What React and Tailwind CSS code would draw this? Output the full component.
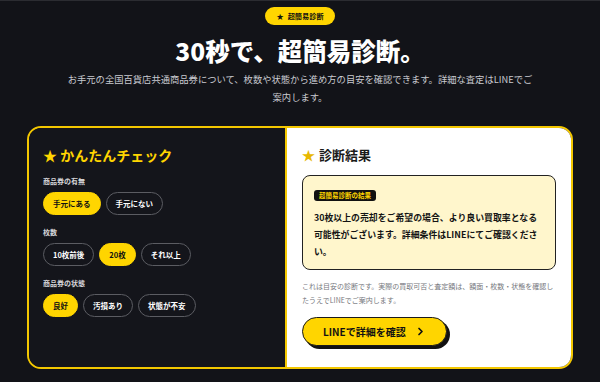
import React, { useState } from "react";

const groups = [
  { label: "商品券の有無", options: ["手元にある", "手元にない"], active: 0 },
  { label: "枚数", options: ["10枚前後", "20枚", "それ以上"], active: 1 },
  { label: "商品券の状態", options: ["良好", "汚損あり", "状態が不安"], active: 0 },
];

function Choice({ group }) {
  const [active, setActive] = useState(group.active);
  return (
    <div className="flex flex-col">
      <div className="text-[7px] leading-[12px] font-bold text-[#d4d4d8]">{group.label}</div>
      <div className="mt-[5px] flex gap-[5px]">
        {group.options.map((opt, i) => (
          <button
            key={opt}
            onClick={() => setActive(i)}
            className={
              i === active
                ? "h-[23px] px-[9px] rounded-full bg-[#ffd500] border-[1.5px] border-[#ffd500] text-[7.5px] font-bold text-[#111] flex items-center"
                : "h-[23px] px-[9px] rounded-full border-[1.5px] border-[#5b5c62] text-[7.5px] font-bold text-white flex items-center"
            }
          >
            {opt}
          </button>
        ))}
      </div>
    </div>
  );
}

export default function App() {
  return (
    <div className="min-h-screen bg-[#121318] border-t border-[#2b2c31] font-['Noto_Sans_CJK_JP','Noto_Sans',sans-serif] flex flex-col items-center pt-[6px]">
      {/* top badge */}
      <div className="h-[18px] px-[11px] rounded-full bg-[#ffd500] flex items-center gap-[4px] text-[7.2px] font-bold text-[#111]">
        <span>★</span>
        <span>超簡易診断</span>
      </div>

      <h1 className="mt-[10px] text-[24.5px] leading-[32px] font-black text-white">30秒で、超簡易診断。</h1>

      <p className="mt-[4px] text-center text-[9.3px] leading-[17.5px] text-[#c9cad0]">
        お手元の全国百貨店共通商品券について、枚数や状態から進め方の目安を確認できます。詳細な査定はLINEでご
        <br />
        案内します。
      </p>

      {/* main card */}
      <div className="mt-[20px] w-[546px] h-[243px] rounded-[14px] border-2 border-[#f3c700] overflow-hidden grid grid-cols-[256px_1fr]">
        {/* left: quick check */}
        <div className="bg-[#14151b] pt-[17px] px-[14px] flex flex-col">
          <h2 className="text-[14px] leading-[20px] font-bold text-[#ffd500]">★ かんたんチェック</h2>
          <div className="mt-[10px] flex flex-col gap-[11px]">
            {groups.map((g) => (
              <Choice key={g.label} group={g} />
            ))}
          </div>
        </div>

        {/* right: result */}
        <div className="bg-white border-l-2 border-[#f3c700] pt-[17px] px-[15px] flex flex-col">
          <h2 className="text-[13px] leading-[20px] font-bold text-[#1a1a1a] flex items-center gap-[4px]">
            <span className="text-[#e8b800]">★</span>
            <span>診断結果</span>
          </h2>

          <div className="mt-[10px] rounded-[8px] border-[1.5px] border-[#222] bg-[#fff6cc] pt-[14px] pb-[9px] px-[11px]">
            <div className="w-fit rounded-[3px] bg-[#111] px-[5px] text-[6.5px] leading-[11px] font-bold text-[#ffd500]">
              超簡易診断の結果
            </div>
            <p className="mt-[8px] whitespace-nowrap text-[8.9px] leading-[17px] font-bold text-[#141414]">
              30枚以上の売却をご希望の場合、より良い買取率となる
              <br />
              可能性がございます。詳細条件はLINEにてご確認くださ
              <br />
              い。
            </p>
          </div>

          <p className="mt-[9px] whitespace-nowrap text-[7px] leading-[14px] text-[#76777d]">
            これは目安の診断です。実際の買取可否と査定額は、額面・枚数・状態を確認し
            <br />
            たうえでLINEでご案内します。
          </p>

          <div className="mt-[10px]">
            <button className="h-[29px] pl-[20px] pr-[22px] rounded-full bg-[#ffd500] border-[1.5px] border-[#1a1a1a] shadow-[3px_3px_0_#111] flex items-center gap-[11px] text-[10px] font-bold text-[#111]">
              <span>LINEで詳細を確認</span>
              <svg width="7" height="9" viewBox="0 0 7 9" fill="none">
                <path d="M2 1.5l3 3-3 3" stroke="#111" strokeWidth="1.7" strokeLinecap="round" strokeLinejoin="round" />
              </svg>
            </button>
          </div>
        </div>
      </div>
    </div>
  );
}
